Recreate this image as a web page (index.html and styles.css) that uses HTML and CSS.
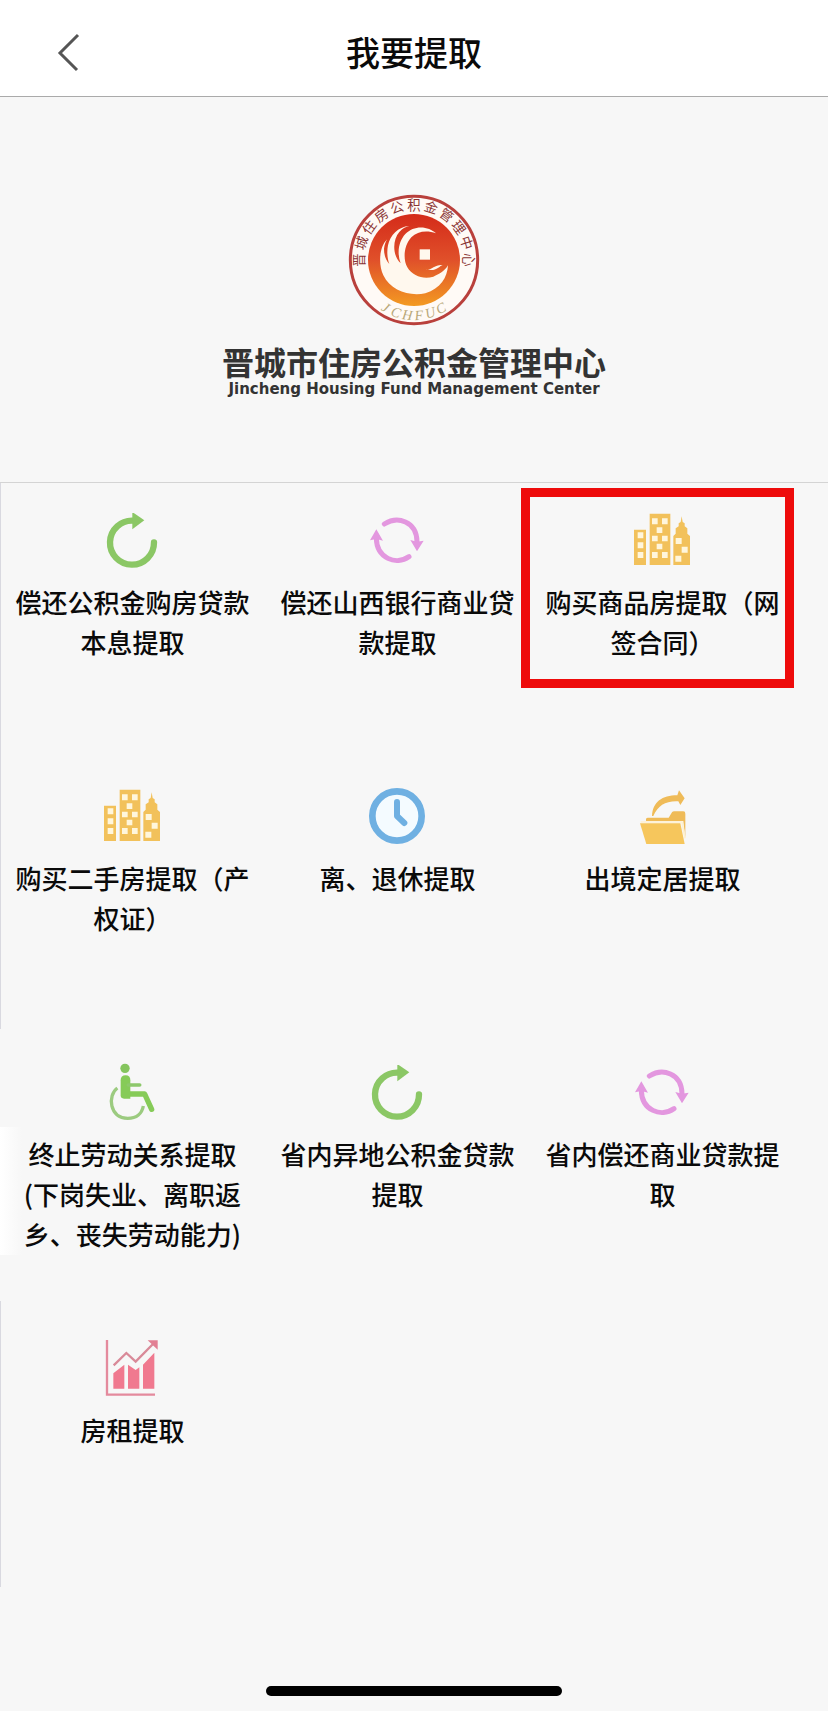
FILE: index.html
```html
<!DOCTYPE html>
<html lang="zh-CN">
<head>
    <meta charset="UTF-8">
    <meta name="viewport" content="width=device-width, initial-scale=1.0">
    <title>我要提取</title>
    <link rel="stylesheet" href="styles.css">
</head>
<body>
    <!-- shared icons -->
    <svg class="symbols" aria-hidden="true">
        <symbol id="icon-refresh" viewBox="312 114 168 168">
            <path d="M462 202A66 66 0 1 1 400 137" fill="none" stroke="#8bc765" stroke-width="19" stroke-linecap="round"/>
            <path d="M397 111L433 136L397 163Z" fill="#8bc765"/>
        </symbol>
        <symbol id="icon-cycle" viewBox="327 114 168 168">
            <g fill="none" stroke="#e397df" stroke-width="15" stroke-linecap="round">
                <path d="M373 147C412 122 470 138 471 200"/>
                <path d="M447 245C408 272 350 250 349 190"/>
            </g>
            <path d="M451 195L471 200L491 197L471 229ZM330 196L349 163L369 197L349 192Z" fill="#e397df"/>
        </symbol>
        <symbol id="icon-building" viewBox="372 114 168 168">
            <path d="M372 164H408V270H372ZM419 116H481V270H419ZM490 270V183L497 176V160L506 154V145L512 141L515 124L518 141L524 145V154L532 160V176L540 183V270Z" fill="#f2c15b"/>
            <path d="M383 172h17v18h-17zM383 202h17v18h-17zM383 231h17v18h-17zM426 130h17v18h-17zM456 130h17v18h-17zM440 157h17v17h-17zM426 182h17v17h-17zM456 182h17v17h-17zM440 206h17v17h-17zM426 231h17v18h-17zM456 231h17v18h-17zM497 189h18v18h-18zM515 215h18v18h-18zM496 242h18v18h-18z" fill="#fff6dc"/>
        </symbol>
    </svg>

    <header class="header">
        <button class="back" type="button" aria-label="返回">
            <svg viewBox="0 0 24 40"><path d="M22 2L4 20L21 37" fill="none" stroke="#555" stroke-width="3"/></svg>
        </button>
        <h1>我要提取</h1>
    </header>

    <section class="brand">
        <svg class="emblem" viewBox="54 42 396 396">
            <defs>
                <linearGradient id="disc" x1="0" y1="0" x2="0" y2="1">
                    <stop offset="0" stop-color="#d42b1a"/>
                    <stop offset="0.5" stop-color="#e0502a"/>
                    <stop offset="1" stop-color="#f39a22"/>
                </linearGradient>
            </defs>
            <circle cx="252" cy="240" r="191" fill="#fffaf6" stroke="#b9403c" stroke-width="9"/>
            <circle cx="252" cy="240" r="138" fill="url(#disc)"/>
            <path d="M318 160C296 138 252 134 226 162C206 184 200 218 212 250C186 226 188 178 208 156C218 144 228 140 238 138C204 140 180 166 174 196C170 216 172 236 178 252C166 240 162 222 162 206C164 194 166 186 172 178C148 198 144 252 160 286C182 332 238 350 286 340C332 326 352 292 354 256C344 274 324 284 310 290C282 298 248 290 232 262C218 236 222 196 244 172C262 154 290 150 318 160Z" fill="#fff8ee"/>
            <path d="M288 268C302 272 316 252 338 255C326 260 318 276 288 268Z" fill="#fff8ee"/>
            <rect x="269" y="208" width="31" height="31" fill="#fff8ee"/>
            <g class="ring-text">
                <text x="252" y="89" transform="rotate(-90 252 240)">晋</text>
                <text x="252" y="89" transform="rotate(-72 252 240)">城</text>
                <text x="252" y="89" transform="rotate(-54 252 240)">住</text>
                <text x="252" y="89" transform="rotate(-36 252 240)">房</text>
                <text x="252" y="89" transform="rotate(-18 252 240)">公</text>
                <text x="252" y="89">积</text>
                <text x="252" y="89" transform="rotate(18 252 240)">金</text>
                <text x="252" y="89" transform="rotate(36 252 240)">管</text>
                <text x="252" y="89" transform="rotate(54 252 240)">理</text>
                <text x="252" y="89" transform="rotate(72 252 240)">中</text>
                <text x="252" y="89" transform="rotate(90 252 240)">心</text>
            </g>
            <g class="ring-latin">
                <text x="252" y="420" transform="rotate(31 252 240)">J</text>
                <text x="252" y="420" transform="rotate(19 252 240)">C</text>
                <text x="252" y="420" transform="rotate(7 252 240)">H</text>
                <text x="252" y="420" transform="rotate(-5 252 240)">F</text>
                <text x="252" y="420" transform="rotate(-17 252 240)">U</text>
                <text x="252" y="420" transform="rotate(-29 252 240)">C</text>
            </g>
        </svg>
        <h2>晋城市住房公积金管理中心</h2>
        <p>Jincheng Housing Fund Management Center</p>
    </section>

    <nav class="menu">
        <a href="#" class="item">
            <svg><use href="#icon-refresh"/></svg>
            <span>偿还公积金购房贷款本息提取</span>
        </a>
        <a href="#" class="item">
            <svg><use href="#icon-cycle"/></svg>
            <span>偿还山西银行商业贷款提取</span>
        </a>
        <a href="#" class="item active">
            <svg><use href="#icon-building"/></svg>
            <span>购买商品房提取（网签合同）</span>
        </a>
        <a href="#" class="item">
            <svg><use href="#icon-building"/></svg>
            <span>购买二手房提取（产权证）</span>
        </a>
        <a href="#" class="item">
            <svg viewBox="57 57 168 168">
                <circle cx="141" cy="138" r="74" fill="#f4fbff" stroke="#6fb0e2" stroke-width="20"/>
                <path d="M141 96V138L163 159" fill="none" stroke="#6fb0e2" stroke-width="18" stroke-linecap="round" stroke-linejoin="round"/>
            </svg>
            <span>离、退休提取</span>
        </a>
        <a href="#" class="item">
            <svg viewBox="852 57 168 168">
                <path d="M906 138C908 96 936 76 982 76L987 61L1004 85L991 105L985 94C948 92 924 106 910 138Z" fill="#efbb58"/>
                <path d="M888 153V147Q889 143 894 143H956L966 127Q968 124 973 124H1000Q1006 124 1006 131V204L1000 153Z" fill="#efbb58"/>
                <path d="M870 160H991L1004 222H889Z" fill="#f6c65c"/>
                <path d="M872 156H996L1005 205" fill="none" stroke="#fff1cf" stroke-width="5"/>
            </svg>
            <span>出境定居提取</span>
        </a>
        <a href="#" class="item">
            <svg viewBox="312 45 168 168">
                <circle cx="375" cy="55" r="14" fill="#85c55e"/>
                <path d="M352 114C322 136 328 205 383 205C410 205 426 190 430 168" fill="none" stroke="#9ccb80" stroke-width="10"/>
                <path d="M377 90V132H434L455 178" fill="none" stroke="#86cb58" stroke-width="16" stroke-linecap="round" stroke-linejoin="round"/>
                <path d="M362 91Q362 76 377 76Q391 76 391 91V146H372Q362 146 362 136Z" fill="#86cb58"/>
                <path d="M385 105H419" stroke="#8dc86b" stroke-width="11" stroke-linecap="round"/>
            </svg>
            <span>终止劳动关系提取(下岗失业、离职返乡、丧失劳动能力)</span>
        </a>
        <a href="#" class="item">
            <svg><use href="#icon-refresh"/></svg>
            <span>省内异地公积金贷款提取</span>
        </a>
        <a href="#" class="item">
            <svg><use href="#icon-cycle"/></svg>
            <span>省内偿还商业贷款提取</span>
        </a>
        <a href="#" class="item">
            <svg viewBox="132 63 168 168">
                <path d="M141 60V224H285" fill="none" stroke="#e48a9d" stroke-width="7"/>
                <path d="M160 160L193 134V206H160ZM204 134L227 150L238 142V206H204ZM249 134L283 98V206H249Z" fill="#f0798f"/>
                <path d="M161 136L199 99L227 125L279 72" fill="none" stroke="#d98a99" stroke-width="7"/>
                <path d="M263 61H293V89Z" fill="#e27f93"/>
            </svg>
            <span>房租提取</span>
        </a>
    </nav>

    <div class="home-bar"></div>
</body>
</html>
```

FILE: styles.css
```css
* {
    box-sizing: border-box;
}
body {
    margin: 0;
    min-height: 100vh;
    display: flex;
    flex-direction: column;
    background-color: #f7f7f7;
    color: #0a0a0a;
    font-family: "Noto Sans CJK SC", sans-serif;
}
.symbols {
    display: none;
}
.header {
    display: grid;
    grid-template-columns: 1fr auto 1fr;
    align-items: center;
    height: 97px;
    padding: 8px 48px 0;
    background-color: #fff;
    border-bottom: 1px solid #aaa;
}
.header h1 {
    margin: 0;
    font-size: 34px;
    font-weight: 500;
    line-height: 48px;
}
.back {
    justify-self: start;
    padding: 2px 8px 0;
    border: none;
    background: none;
    cursor: pointer;
}
.back svg {
    display: block;
    width: 24px;
    height: 40px;
}
.brand {
    display: flex;
    flex-direction: column;
    align-items: center;
    height: 385px;
    padding-top: 97px;
    color: #333;
}
.emblem {
    width: 132px;
    height: 132px;
}
.ring-text {
    fill: #8a3535;
    font-size: 40px;
    font-weight: 400;
    text-anchor: middle;
}
.ring-latin {
    fill: #b9a878;
    font-family: "Liberation Serif", serif;
    font-size: 42px;
    font-style: italic;
    text-anchor: middle;
}
.brand h2 {
    margin: 15px 0 0;
    font-size: 32px;
    font-weight: 700;
    line-height: 40px;
}
.brand p {
    margin: 0;
    font-family: "DejaVu Sans", sans-serif;
    font-size: 15px;
    font-weight: 700;
    line-height: 16px;
}
.menu {
    display: grid;
    grid-template-columns: repeat(3, 32%);
    grid-auto-rows: 276px;
    border-top: 1px solid #d4d4d4;
    /* left rule, interrupted beside the third row */
    background:
        linear-gradient(#d9d9e0, #d9d9e0) 0 0 / 1px 546px no-repeat,
        linear-gradient(#d9d9e0, #d9d9e0) 0 100% / 1px 286px no-repeat,
        linear-gradient(90deg, #fff, #f7f7f7) 0 644px / 22px 128px no-repeat;
}
.item {
    position: relative;
    display: flex;
    flex-direction: column;
    align-items: center;
    gap: 13px;
    padding: 30px 12px 0;
    color: inherit;
    text-align: center;
    text-decoration: none;
    font-size: 26px;
    font-weight: 500;
    line-height: 40px;
}
.item svg {
    flex: none;
    width: 56px;
    height: 56px;
    overflow: visible;
}
.active::after {
    content: "";
    position: absolute;
    top: 5px;
    left: -9px;
    right: 1px;
    box-sizing: border-box;
    height: 200px;
    border: 9px solid #ee0b0b;
}
.home-bar {
    width: 296px;
    height: 10px;
    margin: auto auto 15px;
    border-radius: 5px;
    background-color: #000;
}
```
